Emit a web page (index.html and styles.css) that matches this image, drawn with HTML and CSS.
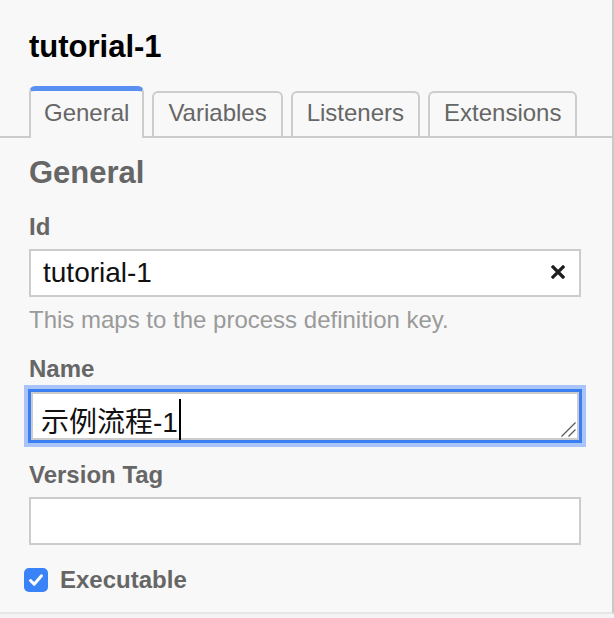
FILE: index.html
```html
<!DOCTYPE html>
<html lang="en">
<head>
<meta charset="utf-8">
<title>Properties</title>
<link rel="stylesheet" href="styles.css">
</head>
<body>
<div class="panel">
  <div class="header">tutorial-1</div>
  <ul class="tabs">
    <li class="tab active">General</li>
    <li class="tab">Variables</li>
    <li class="tab">Listeners</li>
    <li class="tab">Extensions</li>
  </ul>
  <div class="group">
    <div class="group-label">General</div>

    <label class="field-label">Id</label>
    <div class="input-wrap">
      <input class="text-input" type="text" value="tutorial-1">
      <span class="clear">
        <svg width="14" height="14" viewBox="0 0 14 14"><path d="M2 2 L12 12 M12 2 L2 12" stroke="#1e1e1e" stroke-width="3.2" stroke-linecap="square" fill="none"/></svg>
      </span>
    </div>
    <div class="hint">This maps to the process definition key.</div>

    <label class="field-label name-label">Name</label>
    <div class="textarea focused" role="textbox">示例流程-1<span class="caret"></span>
      <svg class="grip" width="15" height="15" viewBox="0 0 15 15"><path d="M0.5 14.5 L14.5 0.5 M7.5 14.5 L14.5 7.5" stroke="#5a5a5a" stroke-width="1.3" fill="none"/></svg>
    </div>

    <label class="field-label name-label">Version Tag</label>
    <div class="input-wrap">
      <input class="text-input" type="text" value="">
    </div>

    <div class="check-row">
      <span class="checkbox">
        <svg width="24" height="24" viewBox="0 0 24 24"><path d="M6.5 12.5 L10.2 16.3 L17.5 7.8" stroke="#fff" stroke-width="3" stroke-linecap="round" stroke-linejoin="round" fill="none"/></svg>
      </span>
      <span class="check-label">Executable</span>
    </div>
  </div>
</div>
</body>
</html>
```
FILE: styles.css
```css
html, body {
  margin: 0;
  padding: 0;
}
body {
  background: #f4f4f4;
  font-family: "Liberation Sans", Arial, sans-serif;
}
.panel {
  width: 612px;
  height: 612px;
  background: #f8f8f8;
  border-right: 2px solid #c9c9c9;
  border-bottom: 2px solid #e6e6e6;
  overflow: hidden;
}
.header {
  padding: 29px 29px 0;
  font-size: 31px;
  font-weight: bold;
  line-height: 36px;
  color: #000;
}
.tabs {
  list-style: none;
  margin: 21px 0 0;
  padding: 0 0 0 29px;
  height: 50px;
  display: flex;
  align-items: flex-end;
  gap: 8px;
  border-bottom: 2px solid #cccccc;
}
.tab {
  box-sizing: border-box;
  height: 45px;
  padding: 6px 14px 0;
  border: 2px solid #cccccc;
  border-bottom: none;
  border-radius: 6px 6px 0 0;
  font-size: 24px;
  line-height: 28px;
  color: #666;
}
.tab.active {
  height: 52px;
  margin-bottom: -2px;
  padding: 8px 13px 0;
  border-top: 5px solid #5b90f3;
  background: #f8f8f8;
}
.group {
  padding: 0 31px 0 29px;
  display: flex;
  flex-direction: column;
}
.group-label {
  margin-top: 18px;
  font-size: 31px;
  line-height: 34px;
  font-weight: bold;
  color: #666;
}
.field-label {
  margin-top: 23px;
  font-size: 24px;
  line-height: 28px;
  font-weight: bold;
  color: #666;
}
.name-label {
  margin-top: 21px;
}
.input-wrap {
  position: relative;
  margin-top: 8px;
}
.text-input {
  display: block;
  box-sizing: border-box;
  width: 100%;
  height: 48px;
  margin: 0;
  padding: 0 44px 0 12px;
  border: 2px solid #cccccc;
  border-radius: 0;
  background: #fff;
  font-family: "Liberation Sans", Arial, sans-serif;
  font-size: 28px;
  color: #111;
  outline: none;
}
.clear {
  position: absolute;
  right: 16px;
  top: 16px;
  width: 14px;
  height: 14px;
  display: block;
}
.clear svg {
  display: block;
}
.hint {
  margin-top: 9px;
  font-size: 24px;
  line-height: 28px;
  color: #9a9a9a;
}
.textarea {
  position: relative;
  box-sizing: border-box;
  margin: 9px 2px 0;
  height: 48px;
  padding: 14px 8px 0;
  border: 2px solid #cccccc;
  background: #fff;
  font-family: "Liberation Sans", "Noto Sans CJK SC", sans-serif;
  font-size: 28px;
  line-height: 30px;
  color: #111;
  white-space: nowrap;
}
.textarea.focused {
  box-shadow: 0 0 0 3px #3b7ef2, 0 0 0 7px #a8c4f8;
}
.caret {
  display: inline-block;
  width: 2px;
  height: 41px;
  margin-top: -11px;
  margin-left: 1px;
  vertical-align: -8px;
  background: #000;
}
.grip {
  position: absolute;
  right: 1px;
  bottom: 1px;
  display: block;
}
.check-row {
  margin: 23px 0 0 -5px;
  display: flex;
  align-items: center;
  gap: 12px;
  height: 24px;
}
.checkbox {
  width: 24px;
  height: 24px;
  border-radius: 5px;
  background: #3a82f7;
  display: block;
}
.checkbox svg {
  display: block;
}
.check-label {
  font-size: 24px;
  line-height: 28px;
  font-weight: bold;
  color: #666;
}
```
